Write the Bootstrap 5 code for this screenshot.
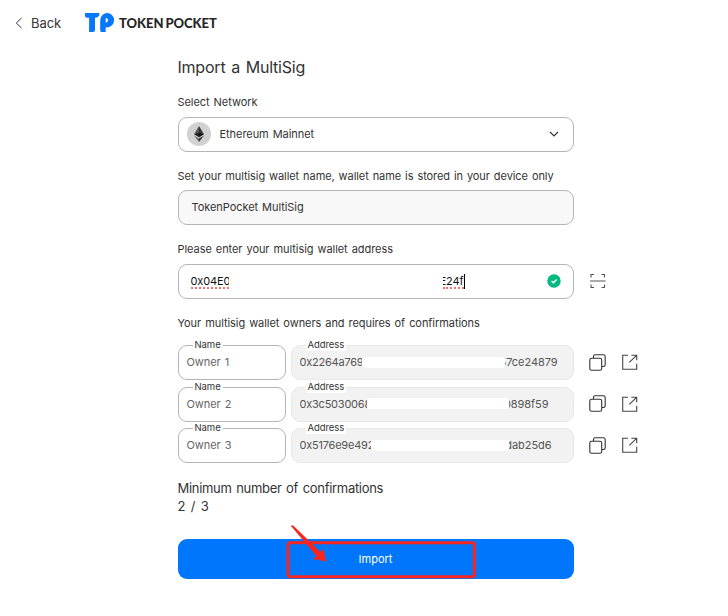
<!DOCTYPE html>
<html lang="en">
<head>
<meta charset="utf-8">
<meta name="viewport" content="width=device-width, initial-scale=1">
<title>Import a MultiSig</title>
<link href="https://cdn.jsdelivr.net/npm/bootstrap@5.3.0/dist/css/bootstrap.min.css" rel="stylesheet">
<style>
body{font-family:Inter,"Liberation Sans",sans-serif;font-size:11px;line-height:16px;color:#333;background:#fff;overflow:hidden;word-spacing:1px;letter-spacing:-.06px}
svg{display:block;flex:none}
.topbar{height:46px;padding-left:15px}
.back-link{font-size:13px;color:#333;gap:8px;width:70px}
.wordmark{font:900 13px/16px Lato,sans-serif;color:#262626;margin-left:4px;letter-spacing:-.05px;word-spacing:-1px}
.main-form{width:480px;margin-left:177.5px}
.title{font-size:16px;line-height:20px;font-weight:400;margin:11px 0 17px;color:#333;word-spacing:1.5px;letter-spacing:-.22px}
.box{height:35px;border:1px solid #b5b5b5;border-radius:9px;background:#fff;padding-bottom:1px}
.wide{width:396px}
.field-label{height:16px;margin-bottom:7px;white-space:nowrap}
.muted-box{background:#f8f8f8;padding-left:13px}
.net-name{margin-left:9px}
.chevron{margin-right:14px}
.clip{overflow:hidden;white-space:nowrap;flex:none}
.patch{height:11px;background:#fff;border-radius:3px;flex:1}
.tag-label{position:absolute;top:-7px;left:14px;height:12px;line-height:12px;font-size:9.5px;background:#fff;padding:0 2px;color:#333}
.owner{width:108px;padding-left:8px;color:#666}
.addr{width:283px;background:#f2f2f2;border-color:#e8e8e8;padding-left:8px;color:#555;margin-left:5px}
.misspelt{color:#111;height:15px;line-height:15px;border-bottom:2px dotted #f27676}
.caret{width:1px;height:15px;background:#000}
.import-btn,.import-btn:hover{height:40px;border:0;border-radius:9px;background:#0076fc;color:#fff;font-size:11px}
.marker{position:absolute;left:108px;top:-15px}
.second{margin-top:16px;margin-bottom:6px;letter-spacing:-.08px}
.third{margin-top:16px}
.fourth{margin-top:16px;margin-bottom:14px}
.address-entry{padding-left:12px;padding-right:12px}
.entry-start{width:38px;letter-spacing:-.1px}
.entry-end{width:21px}
.check{margin-left:82px}
.owners{display:grid;row-gap:6.5px}
.copy-icon{margin-left:15.5px;margin-bottom:1px}
.open-icon{margin-left:16px;margin-bottom:1px}
.head{letter-spacing:-.22px}
.a1{padding-right:15px}.a1 .head{width:62px}.a1 .tail{width:53px}
.a2{padding-right:24px}.a2 .head{width:67px}.a2 .tail{width:40px}
.a3{padding-right:21px}.a3 .head{width:71px}.a3 .tail{width:43px}
.minimum{font-size:13px;line-height:18px;margin:16px 0 24px;letter-spacing:-.3px;word-spacing:1.2px}
.count{letter-spacing:0;word-spacing:1.6px}
</style>
</head>
<body>
<svg width="0" height="0" class="position-absolute" aria-hidden="true">
<symbol id="copy" viewBox="0 0 17 17"><g fill="none" stroke="#333" stroke-width="1.1"><rect x=".8" y="4.3" width="11.9" height="11.9" rx="1.8"/><path d="M4.5 4V2.5Q4.5 .8 6.2 .8H14.3Q16.2 .8 16.2 2.7V10.8Q16.2 12.5 14.5 12.5H13"/></g></symbol>
<symbol id="open" viewBox="0 0 16 16"><path d="M6 1.2H.7V15.2H14.7V9.8M9.3 1.2H14.7V6.3M14.6 1.3L7.3 8.4" fill="none" stroke="#444" stroke-width="1.1"/></symbol>
</svg>
<header class="topbar d-flex align-items-center">
  <a href="#" class="back-link d-flex align-items-center text-decoration-none">
    <svg width="8" height="12" viewBox="0 0 8 12"><path d="M6.5 1L1.3 6l5.2 5" fill="none" stroke="#333" stroke-width="1"/></svg>
    <span>Back</span>
  </a>
  <svg width="30" height="20" viewBox="0 0 30 20"><path d="M0 0H13.5Q14.5 0 14.5 1Q14 4.8 10 4.8V17Q10 19 8 19H4.1V4.8H2Q0 4.8 0 3Z" fill="#0878fa"/><path d="M21.8 0A7.3 7.3 0 0 0 15.2 7V17.5Q15.2 19 16.7 19H20.7V14.3A7.2 7.2 0 1 0 21.8 0ZM20.7 5A2.3 2.3 0 1 1 20.7 9.6Z" fill="#0878fa" fill-rule="evenodd"/></svg>
  <span class="wordmark">TOKEN POCKET</span>
</header>
<main class="main-form">
  <h1 class="title">Import a MultiSig</h1>
  <div class="field-label">Select Network</div>
  <div class="box wide d-flex align-items-center">
    <svg class="ms-2" width="24" height="24" viewBox="0 0 24 24"><circle cx="12" cy="12" r="12" fill="#d1d1d1"/><path d="M12 4L7 12.3 12 10.1Z" fill="#555"/><path d="M12 4l5 8.3-5-2.2Z" fill="#333"/><path d="M7 12.3l5-2.2v5.1Z" fill="#222"/><path d="M17 12.3l-5-2.2v5.1Z" fill="#111"/><path d="M7 13.5l5 3v3.6Z" fill="#666"/><path d="M17 13.5l-5 3v3.6Z" fill="#333"/></svg>
    <span class="net-name">Ethereum Mainnet</span>
    <svg class="ms-auto chevron" width="10" height="7" viewBox="0 0 10 7"><path d="M1 1l4 4 4-4" fill="none" stroke="#333" stroke-width="1.2"/></svg>
  </div>
  <div class="field-label second">Set your multisig wallet name, wallet name is stored in your device only</div>
  <div class="box wide muted-box d-flex align-items-center"><span>TokenPocket MultiSig</span></div>
  <div class="field-label third">Please enter your multisig wallet address</div>
  <div class="d-flex align-items-center">
    <div class="box wide d-flex align-items-center address-entry">
      <span class="clip misspelt entry-start">0x04E0</span>
      <span class="patch"></span>
      <span class="clip misspelt entry-end d-flex justify-content-end">E24f</span><span class="caret"></span>
      <svg class="check" width="14" height="14" viewBox="0 0 14 14"><circle cx="7" cy="7" r="6.7" fill="#05b780"/><path d="M4.5 7l1.9 1.8 3.2-3.3" fill="none" stroke="#fff" stroke-width="1.4"/></svg>
    </div>
    <svg class="ms-3" width="16" height="18" viewBox="0 0 16 18"><path d="M1 4.5V1.5H4M11.5 1.5H14.5V4.5M1 11.5V14.5H4M11.5 14.5H14.5V11.5M0 8H15.5" fill="none" stroke="#555" stroke-width="1.1"/></svg>
  </div>
  <div class="field-label fourth">Your multisig wallet owners and requires of confirmations</div>
  <div class="owners">
    <div class="d-flex align-items-center">
      <div class="box owner position-relative d-flex align-items-center"><span class="tag-label">Name</span>Owner 1</div>
      <div class="box addr position-relative d-flex align-items-center a1"><span class="tag-label">Address</span><span class="clip head">0x2264a769</span><span class="patch"></span><span class="clip tail d-flex justify-content-end">57ce24879</span></div>
      <svg class="copy-icon" width="17" height="17"><use href="#copy"/></svg><svg class="open-icon" width="16" height="16"><use href="#open"/></svg>
    </div>
    <div class="d-flex align-items-center">
      <div class="box owner position-relative d-flex align-items-center"><span class="tag-label">Name</span>Owner 2</div>
      <div class="box addr position-relative d-flex align-items-center a2"><span class="tag-label">Address</span><span class="clip head">0x3c5030068</span><span class="patch"></span><span class="clip tail d-flex justify-content-end">0898f59</span></div>
      <svg class="copy-icon" width="17" height="17"><use href="#copy"/></svg><svg class="open-icon" width="16" height="16"><use href="#open"/></svg>
    </div>
    <div class="d-flex align-items-center">
      <div class="box owner position-relative d-flex align-items-center"><span class="tag-label">Name</span>Owner 3</div>
      <div class="box addr position-relative d-flex align-items-center a3"><span class="tag-label">Address</span><span class="clip head">0x5176e9e492</span><span class="patch"></span><span class="clip tail d-flex justify-content-end">dab25d6</span></div>
      <svg class="copy-icon" width="17" height="17"><use href="#copy"/></svg><svg class="open-icon" width="16" height="16"><use href="#open"/></svg>
    </div>
  </div>
  <div class="minimum">Minimum number of confirmations<div class="count">2 / 3</div></div>
  <div class="wide position-relative">
    <button class="import-btn btn w-100 p-0">Import</button>
    <svg class="marker" width="192" height="56" viewBox="0 0 192 56"><rect x="2" y="18.7" width="186.5" height="34" rx="2.5" fill="none" stroke="#f9251f" stroke-width="3"/><path d="M5 2Q6 .5 7.5 1.7L34.5 28l3-3.2 2.5 12.7-13-2.4 3.4-3.2Z" fill="#f9251f"/></svg>
  </div>
</main>
<script src="https://cdn.jsdelivr.net/npm/bootstrap@5.3.0/dist/js/bootstrap.bundle.min.js"></script>
</body>
</html>
